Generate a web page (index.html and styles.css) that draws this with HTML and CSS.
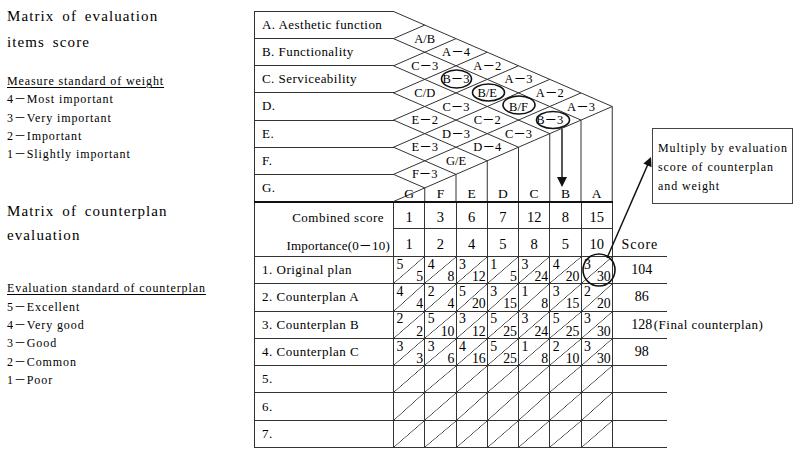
FILE: index.html
```html
<!DOCTYPE html>
<html lang="en">
<head>
<meta charset="utf-8">
<title>Matrix of evaluation</title>
<link rel="stylesheet" href="styles.css">
</head>
<body>
<div class="page">
  <div class="legend">
    <div class="title">Matrix of evaluation<br>items score</div>
    <div class="std">
      <div class="std-head"><u>Measure standard of weight</u></div>
      <div>4－Most important</div>
      <div>3－Very important</div>
      <div>2－Important</div>
      <div>1－Slightly important</div>
    </div>
    <div class="title title2">Matrix of counterplan<br>evaluation</div>
    <div class="std std2">
      <div class="std-head"><u>Evaluation standard of counterplan</u></div>
      <div>5－Excellent</div>
      <div>4－Very good</div>
      <div>3－Good</div>
      <div>2－Common</div>
      <div>1－Poor</div>
    </div>
  </div>

  <div class="diagram">
    <div class="top">
      <div class="items">
        <div class="item">A. Aesthetic function</div>
        <div class="item">B. Functionality</div>
        <div class="item">C. Serviceability</div>
        <div class="item">D.</div>
        <div class="item">E.</div>
        <div class="item">F.</div>
        <div class="item">G.</div>
      </div>
      <svg class="lattice" viewBox="0 0 218.75 190" width="218.75" height="190">
        <g transform="translate(-0.5 0)">
          <g class="ln">
            <path d="M0 0.5L218.75 95.5M0 27.64L187.5 109.07M0 54.79L156.25 122.64M0 81.93L125 136.21M0 109.07L93.75 149.79M0 136.21L62.5 163.36M0 163.36L31.25 176.93"/>
            <path d="M0 27.64L31.25 14.07M0 54.79L62.5 27.64M0 81.93L93.75 41.21M0 109.07L125 54.79M0 136.21L156.25 68.36M0 163.36L187.5 81.93M0 190.5L218.75 95.5"/>
            <path d="M218.75 95.5V190M187.5 109.07V190M156.25 122.64V190M125 136.21V190M93.75 149.79V190M62.5 163.36V190M31.25 176.93V190"/>
          </g>
          <g class="dl">
            <text x="31.25" y="31.6">A/B</text>
            <text x="31.25" y="58.8">C－3</text>
            <text x="31.25" y="85.9">C/D</text>
            <text x="31.25" y="113.1">E－2</text>
            <text x="31.25" y="140.2">E－3</text>
            <text x="31.25" y="167.4">F－3</text>
            <text x="62.5" y="45.2">A－4</text>
            <text x="62.5" y="72.4">B－3</text>
            <text x="62.5" y="99.5">C－3</text>
            <text x="62.5" y="126.6">D－3</text>
            <text x="62.5" y="153.8">G/E</text>
            <text x="93.75" y="58.8">A－2</text>
            <text x="93.75" y="85.9">B/E</text>
            <text x="93.75" y="113.1">C－2</text>
            <text x="93.75" y="140.2">D－4</text>
            <text x="125" y="72.4">A－3</text>
            <text x="125" y="99.5">B/F</text>
            <text x="125" y="126.6">C－3</text>
            <text x="156.25" y="85.9">A－2</text>
            <text x="156.25" y="113.1">B－3</text>
            <text x="187.5" y="99.5">A－3</text>
          </g>
          <g class="ring">
            <ellipse cx="63" cy="68" rx="15" ry="9"/>
            <ellipse cx="95" cy="81.5" rx="16" ry="8.5"/>
            <ellipse cx="125.5" cy="94" rx="16" ry="9"/>
            <ellipse cx="159.5" cy="109" rx="16.5" ry="8.5"/>
          </g>
          <path class="arrow-line" d="M168.5 118V168"/>
          <polygon class="arrow-head" points="163.5,166 173.5,166 168.5,176"/>
          <g class="hd">
            <text x="15.6" y="187">G</text>
            <text x="46.9" y="187">F</text>
            <text x="78.1" y="187">E</text>
            <text x="109.4" y="187">D</text>
            <text x="140.6" y="187">C</text>
            <text x="171.9" y="187">B</text>
            <text x="203.1" y="187">A</text>
          </g>
        </g>
      </svg>
    </div>

    <table class="eval">
      <colgroup>
        <col class="c-lab">
        <col class="c-n"><col class="c-n"><col class="c-n"><col class="c-n"><col class="c-n"><col class="c-n"><col class="c-n">
        <col class="c-sc">
      </colgroup>
      <tr class="r-comb">
        <td class="lab lab-comb">Combined score</td>
        <td class="num">1</td><td class="num">3</td><td class="num">6</td><td class="num">7</td><td class="num">12</td><td class="num">8</td><td class="num">15</td>
        <td class="sc sc-none"></td>
      </tr>
      <tr class="r-imp">
        <td class="lab lab-imp">Importance(0－10)</td>
        <td class="num">1</td><td class="num">2</td><td class="num">4</td><td class="num">5</td><td class="num">8</td><td class="num">5</td><td class="num">10</td>
        <td class="sc sc-head">Score</td>
      </tr>
      <tr class="r">
        <td class="lab">1. Original plan</td>
        <td class="f"><div class="fr"><span class="ft">5</span><span class="fb">5</span></div></td>
        <td class="f"><div class="fr"><span class="ft">4</span><span class="fb">8</span></div></td>
        <td class="f"><div class="fr"><span class="ft">3</span><span class="fb">12</span></div></td>
        <td class="f"><div class="fr"><span class="ft">1</span><span class="fb">5</span></div></td>
        <td class="f"><div class="fr"><span class="ft">3</span><span class="fb">24</span></div></td>
        <td class="f"><div class="fr"><span class="ft">4</span><span class="fb">20</span></div></td>
        <td class="f"><div class="fr"><span class="ft">3</span><span class="fb">30</span></div></td>
        <td class="sc"><span class="sv">104</span></td>
      </tr>
      <tr class="r">
        <td class="lab">2. Counterplan A</td>
        <td class="f"><div class="fr"><span class="ft">4</span><span class="fb">4</span></div></td>
        <td class="f"><div class="fr"><span class="ft">2</span><span class="fb">4</span></div></td>
        <td class="f"><div class="fr"><span class="ft">5</span><span class="fb">20</span></div></td>
        <td class="f"><div class="fr"><span class="ft">3</span><span class="fb">15</span></div></td>
        <td class="f"><div class="fr"><span class="ft">1</span><span class="fb">8</span></div></td>
        <td class="f"><div class="fr"><span class="ft">3</span><span class="fb">15</span></div></td>
        <td class="f"><div class="fr"><span class="ft">2</span><span class="fb">20</span></div></td>
        <td class="sc"><span class="sv">86</span></td>
      </tr>
      <tr class="r">
        <td class="lab">3. Counterplan B</td>
        <td class="f"><div class="fr"><span class="ft">2</span><span class="fb">2</span></div></td>
        <td class="f"><div class="fr"><span class="ft">5</span><span class="fb">10</span></div></td>
        <td class="f"><div class="fr"><span class="ft">3</span><span class="fb">12</span></div></td>
        <td class="f"><div class="fr"><span class="ft">5</span><span class="fb">25</span></div></td>
        <td class="f"><div class="fr"><span class="ft">3</span><span class="fb">24</span></div></td>
        <td class="f"><div class="fr"><span class="ft">5</span><span class="fb">25</span></div></td>
        <td class="f"><div class="fr"><span class="ft">3</span><span class="fb">30</span></div></td>
        <td class="sc"><span class="sv">128</span><span class="final">(Final counterplan)</span></td>
      </tr>
      <tr class="r">
        <td class="lab">4. Counterplan C</td>
        <td class="f"><div class="fr"><span class="ft">3</span><span class="fb">3</span></div></td>
        <td class="f"><div class="fr"><span class="ft">3</span><span class="fb">6</span></div></td>
        <td class="f"><div class="fr"><span class="ft">4</span><span class="fb">16</span></div></td>
        <td class="f"><div class="fr"><span class="ft">5</span><span class="fb">25</span></div></td>
        <td class="f"><div class="fr"><span class="ft">1</span><span class="fb">8</span></div></td>
        <td class="f"><div class="fr"><span class="ft">2</span><span class="fb">10</span></div></td>
        <td class="f"><div class="fr"><span class="ft">3</span><span class="fb">30</span></div></td>
        <td class="sc"><span class="sv">98</span></td>
      </tr>
      <tr class="r">
        <td class="lab">5.</td>
        <td class="f"></td><td class="f"></td><td class="f"></td><td class="f"></td><td class="f"></td><td class="f"></td><td class="f"></td>
        <td class="sc"></td>
      </tr>
      <tr class="r">
        <td class="lab">6.</td>
        <td class="f"></td><td class="f"></td><td class="f"></td><td class="f"></td><td class="f"></td><td class="f"></td><td class="f"></td>
        <td class="sc"></td>
      </tr>
      <tr class="r">
        <td class="lab">7.</td>
        <td class="f"></td><td class="f"></td><td class="f"></td><td class="f"></td><td class="f"></td><td class="f"></td><td class="f"></td>
        <td class="sc"></td>
      </tr>
    </table>

    <svg class="overlay" width="546" height="457" viewBox="0 0 546 457">
      <circle class="ring" cx="345" cy="270" r="16"/>
      <path class="arrow-line" d="M353 258L394.2 163.6"/>
      <polygon class="arrow-head" points="397,157 397.6,167.2 389.4,163.6"/>
    </svg>

    <div class="callout">Multiply by evaluation<br>score of counterplan<br>and weight</div>
  </div>
</div>
</body>
</html>
```

FILE: styles.css
```css
html, body {
  margin: 0;
  padding: 0;
  background: #fff;
}

body {
  width: 800px;
  height: 457px;
  overflow: hidden;
  color: #000;
  font-family: "Liberation Serif", "Noto Sans CJK KR", serif;
}

.page {
  display: flex;
  align-items: flex-start;
}

/* ---------- left legend ---------- */
.legend {
  width: 254px;
  flex: none;
  box-sizing: border-box;
  padding: 3px 0 0 7px;
}

.title {
  font-size: 15px;
  line-height: 26px;
  letter-spacing: 1.1px;
  word-spacing: 3px;
}

.title2 {
  margin-top: 36px;
  line-height: 24px;
}

.std {
  margin-top: 17px;
  font-size: 12px;
  line-height: 18.3px;
  letter-spacing: 0.9px;
}

.std2 {
  margin-top: 32px;
}

.std-head u {
  text-underline-offset: 2px;
}

/* ---------- diagram ---------- */
.diagram {
  position: relative;
  flex: none;
  width: 546px;
  height: 457px;
  box-sizing: border-box;
  padding-top: 11px;
}

.top {
  display: flex;
  width: 358.75px;
  border-bottom: 2px solid #111;
}

.items {
  width: 140px;
  flex: none;
  box-sizing: border-box;
  border-left: 1px solid #333;
}

.item {
  height: 27.143px;
  box-sizing: border-box;
  border-top: 1px solid #333;
  padding-left: 7px;
  display: flex;
  align-items: center;
  font-size: 13px;
  letter-spacing: 0.45px;
  white-space: nowrap;
}

.lattice {
  flex: none;
  display: block;
  overflow: visible;
}

.ln path {
  fill: none;
  stroke: #333;
  stroke-width: 1;
}

.dl text {
  font-family: "Liberation Serif", "Noto Sans CJK KR", serif;
  font-size: 12.5px;
  text-anchor: middle;
  fill: #000;
}

.hd text {
  font-family: "Liberation Serif", serif;
  font-size: 13.5px;
  text-anchor: middle;
  fill: #000;
}

.ring {
  fill: none;
  stroke: #111;
  stroke-width: 1.6;
}

.ring ellipse {
  fill: none;
  stroke: #111;
  stroke-width: 1.6;
}

.arrow-line {
  fill: none;
  stroke: #111;
  stroke-width: 1.4;
}

.arrow-head {
  fill: #111;
}

/* ---------- evaluation table ---------- */
.eval {
  border-collapse: separate;
  border-spacing: 0;
  table-layout: fixed;
  width: 412.75px;
}

.c-lab { width: 140px; }
.c-n { width: 31.25px; }
.c-sc { width: 54.25px; }

.eval td {
  padding: 0;
  box-sizing: border-box;
  border-right: 1px solid #333;
  border-bottom: 1px solid #333;
  vertical-align: middle;
}

.eval .r-comb td { height: 26px; padding-top: 4px; }
.eval .r-imp td { height: 28px; padding-top: 4px; }
.eval .r td { height: 27.3px; }

.eval td.lab {
  border-left: 1px solid #333;
  padding-left: 7px;
  font-size: 13px;
  letter-spacing: 0.5px;
  white-space: nowrap;
}

.eval td.lab-comb {
  border-bottom: none;
  text-align: right;
  padding-left: 0;
  padding-right: 9px;
}

.eval td.lab-imp {
  text-align: right;
  padding-left: 0;
  padding-right: 3px;
  letter-spacing: 0.2px;
}

.eval td.num {
  text-align: center;
  font-size: 14.5px;
}

.eval td.f {
  background: linear-gradient(to bottom right, transparent calc(50% - 0.6px), #333 50%, transparent calc(50% + 0.6px));
}

.fr {
  display: flex;
  flex-direction: column;
  justify-content: space-between;
  height: 26px;
  box-sizing: border-box;
  padding: 1.5px 1px 0 2.5px;
  font-size: 13.8px;
  line-height: 12.5px;
}

.ft { align-self: flex-start; }
.fb { align-self: flex-end; }

.eval td.sc {
  border-right: none;
  padding-left: 17px;
  font-size: 14px;
  white-space: nowrap;
  text-align: left;
}

.eval td.sc-none { border-bottom: none; }

.eval td.sc-head {
  padding-left: 0;
  text-align: center;
  letter-spacing: 1px;
}

.sv {
  display: inline-block;
  width: 24px;
  text-align: center;
}

.final {
  font-size: 13px;
  letter-spacing: 0.5px;
}

/* ---------- overlays ---------- */
.overlay {
  position: absolute;
  left: 0;
  top: 0;
  pointer-events: none;
}

.callout {
  position: absolute;
  left: 398px;
  top: 128px;
  width: 141px;
  height: 76px;
  box-sizing: border-box;
  border: 1px solid #444;
  padding: 10px 0 0 5px;
  font-size: 12px;
  line-height: 19px;
  letter-spacing: 0.9px;
  white-space: nowrap;
}
```
